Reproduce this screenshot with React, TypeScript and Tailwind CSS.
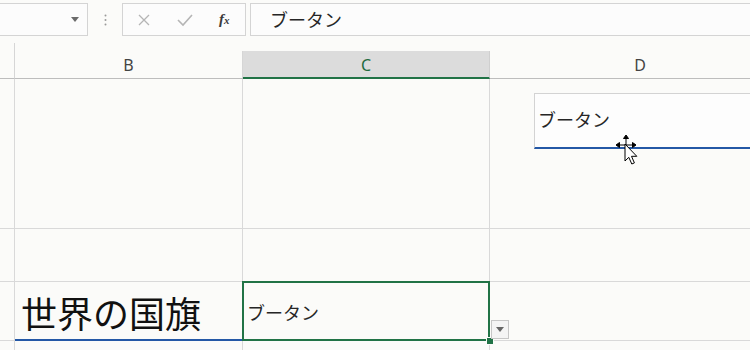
import React from "react";

const JP = { fontFamily: '"Noto Sans CJK JP", "Noto Sans", sans-serif' };
const UI = { fontFamily: '"Noto Sans", "Liberation Sans", sans-serif' };

function MoveCursor() {
  return (
    <svg width="26" height="36" viewBox="0 0 26 36" className="block">
      {/* four-way move arrows */}
      <g stroke="#000" strokeWidth="1" fill="#000">
        <line x1="10" y1="3" x2="10" y2="17" />
        <line x1="3" y1="10" x2="17" y2="10" />
        <path d="M10 0 L12.5 3.5 L7.5 3.5 Z" />
        <path d="M0 10 L3.5 7.5 L3.5 12.5 Z" />
        <path d="M20 10 L16.5 7.5 L16.5 12.5 Z" />
      </g>
      {/* pointer */}
      <path
        d="M9 9 L9 26 L12.8 22.3 L15.8 29 L18.4 27.9 L15.5 21.3 L20.8 21.3 Z"
        fill="#fff"
        stroke="#000"
        strokeWidth="1"
        strokeLinejoin="round"
      />
    </svg>
  );
}

export default function App() {
  return (
    <div className="relative h-[350px] w-[750px] overflow-hidden bg-[#fbfbf9] text-[#262626]">
      {/* formula bar */}
      <div className="flex h-[36px] pt-[3px] items-stretch">
        <div className="-ml-px flex w-[89px] items-center justify-end border border-[#d4d4d4] bg-[#fcfcfc] pr-[8px]">
          <svg width="8" height="5" viewBox="0 0 8 5">
            <path d="M0 0 L8 0 L4 5 Z" fill="#6b6b6b" />
          </svg>
        </div>
        <div className="flex w-[34px] items-center justify-center">
          <svg width="3" height="12" viewBox="0 0 3 12">
            <circle cx="1.5" cy="1.5" r="1" fill="#9a9a9a" />
            <circle cx="1.5" cy="6" r="1" fill="#9a9a9a" />
            <circle cx="1.5" cy="10.5" r="1" fill="#9a9a9a" />
          </svg>
        </div>
        <div className="flex w-[124px] items-center border border-[#d4d4d4] bg-[#fcfcfc]">
          <svg width="14" height="14" viewBox="0 0 14 14" className="ml-[14px]">
            <path d="M2 2 L12 12 M12 2 L2 12" stroke="#b5b5b5" strokeWidth="1.3" />
          </svg>
          <svg width="16" height="14" viewBox="0 0 16 14" className="ml-[26px]">
            <path d="M1 7 L6 12 L15 2" stroke="#b5b5b5" strokeWidth="1.6" fill="none" />
          </svg>
          <span
            className="ml-[26px] text-[15px] font-bold italic text-[#3a3a3a]"
            style={{ fontFamily: '"Liberation Serif", serif' }}
          >
            f<span className="text-[11px]">x</span>
          </span>
        </div>
        <div
          className="ml-[4px] flex flex-1 items-center border border-r-0 border-[#d4d4d4] bg-[#fcfcfc] pl-[19px] text-[18px]"
          style={JP}
        >
          ブータン
        </div>
      </div>

      {/* sheet */}
      <div className="mt-[7px] grid grid-cols-[15px_228px_247px_300px] grid-rows-[36px_150px_53px_59px_20px]">
        {/* header row */}
        <div className="border-r border-b border-r-[#d6d6d6] border-b-[#bdbdbd]" />
        <div className="flex flex-col border-b border-b-[#bdbdbd]">
          <div className="h-[8px]" />
          <div
            className="flex flex-1 items-center justify-center border-r border-r-[#d6d6d6] pt-[1px] text-[16px] text-[#444]"
            style={UI}
          >
            B
          </div>
        </div>
        <div className="flex flex-col">
          <div className="h-[8px]" />
          <div
            className="flex flex-1 items-center justify-center border-r border-r-[#cfcfcf] border-b-2 border-b-[#217346] bg-[#dcdcdc] pt-[1px] text-[16px] text-[#1f6b40]"
            style={UI}
          >
            C
          </div>
        </div>
        <div className="flex flex-col border-b border-b-[#bdbdbd]">
          <div className="h-[8px]" />
          <div
            className="flex flex-1 items-center justify-center pt-[1px] text-[16px] text-[#444]"
            style={UI}
          >
            D
          </div>
        </div>

        {/* row 1 */}
        <div className="border-r border-b border-[#d9d9d9]" />
        <div className="border-r border-b border-[#d9d9d9]" />
        <div className="border-r border-b border-[#d9d9d9]" />
        <div className="border-b border-[#d9d9d9]" />

        {/* row 2 */}
        <div className="border-r border-b border-[#d9d9d9]" />
        <div className="border-r border-b border-[#d9d9d9]" />
        <div className="border-r border-b border-[#d9d9d9]" />
        <div className="border-b border-[#d9d9d9]" />

        {/* row 3 */}
        <div className="border-r border-b border-[#d9d9d9]" />
        <div className="flex border-r border-[#d9d9d9]">
          <div
            className="flex flex-1 items-center border-b-2 border-[#2458a6] pl-[6px] pt-[2px] text-[36px] leading-none text-[#111]"
            style={JP}
          >
            世界の国旗
          </div>
        </div>
        <div className="relative border-r border-b border-[#d9d9d9]">
          <div
            className="absolute -top-px -left-px -right-px -bottom-px flex items-center border-2 border-[#217346] pl-[3px] pt-[2px] text-[18px]"
            style={JP}
          >
            ブータン
          </div>
          <div className="absolute -right-[4px] -bottom-[4px] h-[6px] w-[6px] bg-[#217346] outline outline-1 outline-[#fbfbf9]" />
          <div className="absolute -right-[20px] bottom-[1px] flex h-[19px] w-[18px] items-center justify-center border border-[#c6c6c6] bg-[#f4f4f4]">
            <svg width="8" height="5" viewBox="0 0 8 5">
              <path d="M0 0 L8 0 L4 5 Z" fill="#666" />
            </svg>
          </div>
        </div>
        <div className="border-b border-[#d9d9d9]" />

        {/* row 4 */}
        <div className="border-r border-[#d9d9d9]" />
        <div className="border-r border-[#d9d9d9]" />
        <div className="border-r border-[#d9d9d9]" />
        <div />
      </div>

      {/* floating text box in D */}
      <div
        className="absolute left-[534px] top-[93px] flex h-[56px] w-[230px] items-center border border-[#d3d3d3] border-b-2 border-b-[#2458a6] bg-[#fdfdfd] pl-[3px] pb-[2px] text-[18px]"
        style={JP}
      >
        ブータン
      </div>

      {/* mouse cursor */}
      <div className="absolute left-[616px] top-[135px]">
        <MoveCursor />
      </div>
    </div>
  );
}
